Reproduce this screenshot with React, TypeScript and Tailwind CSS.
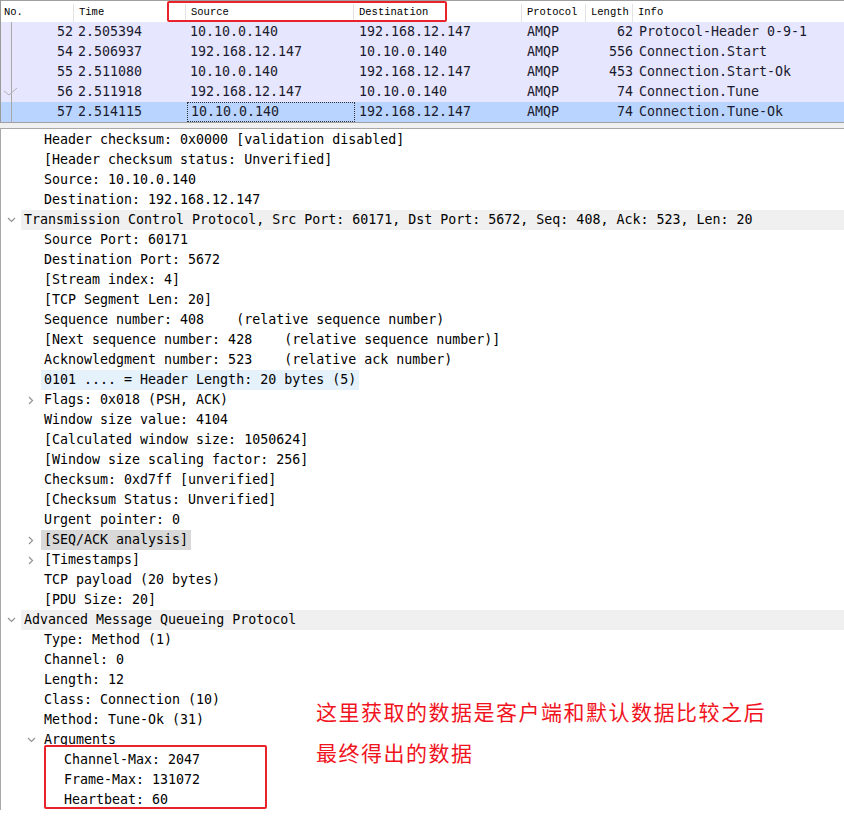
import React from "react";

type Pkt = { no: string; time: string; src: string; dst: string; proto: string; len: string; info: string; sel?: boolean; mark?: "line" | "check" | "end" };

const pkts: Pkt[] = [
  { no: "52", time: "2.505394", src: "10.10.0.140", dst: "192.168.12.147", proto: "AMQP", len: "62", info: "Protocol-Header 0-9-1" },
  { no: "54", time: "2.506937", src: "192.168.12.147", dst: "10.10.0.140", proto: "AMQP", len: "556", info: "Connection.Start" },
  { no: "55", time: "2.511080", src: "10.10.0.140", dst: "192.168.12.147", proto: "AMQP", len: "453", info: "Connection.Start-Ok" },
  { no: "56", time: "2.511918", src: "192.168.12.147", dst: "10.10.0.140", proto: "AMQP", len: "74", info: "Connection.Tune", mark: "check" },
  { no: "57", time: "2.514115", src: "10.10.0.140", dst: "192.168.12.147", proto: "AMQP", len: "74", info: "Connection.Tune-Ok", sel: true },
];

type Row = { t: string; lvl: number; arrow?: "down" | "right"; bg?: "top" | "blue" | "gray" };

const rows: Row[] = [
  { t: "Header checksum: 0x0000 [validation disabled]", lvl: 1 },
  { t: "[Header checksum status: Unverified]", lvl: 1 },
  { t: "Source: 10.10.0.140", lvl: 1 },
  { t: "Destination: 192.168.12.147", lvl: 1 },
  { t: "Transmission Control Protocol, Src Port: 60171, Dst Port: 5672, Seq: 408, Ack: 523, Len: 20", lvl: 0, arrow: "down", bg: "top" },
  { t: "Source Port: 60171", lvl: 1 },
  { t: "Destination Port: 5672", lvl: 1 },
  { t: "[Stream index: 4]", lvl: 1 },
  { t: "[TCP Segment Len: 20]", lvl: 1 },
  { t: "Sequence number: 408    (relative sequence number)", lvl: 1 },
  { t: "[Next sequence number: 428    (relative sequence number)]", lvl: 1 },
  { t: "Acknowledgment number: 523    (relative ack number)", lvl: 1 },
  { t: "0101 .... = Header Length: 20 bytes (5)", lvl: 1, bg: "blue" },
  { t: "Flags: 0x018 (PSH, ACK)", lvl: 1, arrow: "right" },
  { t: "Window size value: 4104", lvl: 1 },
  { t: "[Calculated window size: 1050624]", lvl: 1 },
  { t: "[Window size scaling factor: 256]", lvl: 1 },
  { t: "Checksum: 0xd7ff [unverified]", lvl: 1 },
  { t: "[Checksum Status: Unverified]", lvl: 1 },
  { t: "Urgent pointer: 0", lvl: 1 },
  { t: "[SEQ/ACK analysis]", lvl: 1, arrow: "right", bg: "gray" },
  { t: "[Timestamps]", lvl: 1, arrow: "right" },
  { t: "TCP payload (20 bytes)", lvl: 1 },
  { t: "[PDU Size: 20]", lvl: 1 },
  { t: "Advanced Message Queueing Protocol", lvl: 0, arrow: "down", bg: "top" },
  { t: "Type: Method (1)", lvl: 1 },
  { t: "Channel: 0", lvl: 1 },
  { t: "Length: 12", lvl: 1 },
  { t: "Class: Connection (10)", lvl: 1 },
  { t: "Method: Tune-Ok (31)", lvl: 1 },
  { t: "Arguments", lvl: 1, arrow: "down" },
  { t: "Channel-Max: 2047", lvl: 2 },
  { t: "Frame-Max: 131072", lvl: 2 },
  { t: "Heartbeat: 60", lvl: 2 },
];

const mono = { fontFamily: '"DejaVu Sans Mono", monospace' };

function Arrow({ dir }: { dir: "down" | "right" }) {
  if (dir === "down")
    return (
      <svg width="9" height="6" viewBox="0 0 9 6">
        <path d="M1 1 L4.5 4.5 L8 1" fill="none" stroke="#939393" strokeWidth="1.2" />
      </svg>
    );
  return (
    <svg width="6" height="9" viewBox="0 0 6 9">
      <path d="M1 1 L4.5 4.5 L1 8" fill="none" stroke="#939393" strokeWidth="1.2" />
    </svg>
  );
}

export default function App() {
  return (
    <div className="relative h-[816px] w-[844px] overflow-hidden bg-white text-black" style={mono}>
      {/* Packet list */}
      <div className="border-l border-[#9a9a9a]">
        <div
          className="flex h-[22px] items-center border-t border-[#a0a0a0] bg-white pt-[3px] text-[10.5px] text-black"
          style={{ fontFamily: '"Liberation Mono", monospace' }}
        >
          <div className="flex h-full w-[73px] items-center border-r border-[#e3e3e3] pl-[3px]">No.</div>
          <div className="flex h-full w-[112px] items-center border-r border-[#e3e3e3] pl-[5px]">Time</div>
          <div className="flex h-full w-[168px] items-center border-r border-[#e3e3e3] pl-[5px]">Source</div>
          <div className="flex h-full w-[168px] items-center border-r border-[#e3e3e3] pl-[5px]">Destination</div>
          <div className="flex h-full w-[64px] items-center border-r border-[#e3e3e3] pl-[5px]">Protocol</div>
          <div className="flex h-full w-[47px] items-center border-r border-[#e3e3e3] pl-[5px]">Length</div>
          <div className="flex h-full flex-1 items-center pl-[5px]">Info</div>
        </div>
        {pkts.map((p) => (
          <div
            key={p.no}
            className={`flex h-5 items-center text-[13.3px] leading-5 text-[#1a1a2e] ${p.sel ? "bg-[#b9d5ff]" : "bg-[#e7e6ff]"}`}
          >
            <div className="relative flex h-full w-[73px] items-center justify-end pr-[1px]">
              <svg className="absolute left-0 top-0" width="20" height="20" viewBox="0 0 20 20">
                <line x1="10.5" y1="0" x2="10.5" y2="20" stroke="#a8a8a8" strokeWidth="1" />
                {p.mark === "check" && (
                  <path d="M3 9 L8 13 L16 6" fill="none" stroke="#b0b0b0" strokeWidth="1" />
                )}
              </svg>
              {p.no}
            </div>
            <div className="w-[113px] pl-[4px]">{p.time}</div>
            <div className={`flex h-full w-[168px] items-center pl-[3px] ${p.sel ? "border border-dotted border-[#333]" : ""}`}>
              {p.src}
            </div>
            <div className="w-[168px] pl-[4px]">{p.dst}</div>
            <div className="w-[64px] pl-[4px]">{p.proto}</div>
            <div className="w-[47px] pr-[1px] text-right">{p.len}</div>
            <div className="flex-1 pl-[5px]">{p.info}</div>
          </div>
        ))}
      </div>
      {/* separator */}
      <div className="h-[6px] border-t border-[#a0a0a0] bg-[#f0f0f0]" />
      {/* Detail tree */}
      <div className="border-l border-t border-[#a8a8a8] pt-[1px] text-[13.3px] leading-5">
        {rows.map((r, i) => (
          <div key={i} className="flex h-5 items-center" style={{ paddingLeft: r.lvl * 20 }}>
            <div className="flex h-5 w-[20px] shrink-0 items-center justify-center">
              {r.arrow && <Arrow dir={r.arrow} />}
            </div>
            <span
              className={`h-5 whitespace-pre px-[3px] ${
                r.bg === "top" ? "flex-1 bg-[#f0f0f0]" : r.bg === "blue" ? "bg-[#e5f1fb]" : r.bg === "gray" ? "bg-[#d9d9d9]" : ""
              }`}
            >
              {r.t}
            </span>
          </div>
        ))}
      </div>

      {/* annotations */}
      <div className="absolute left-[167px] top-[1px] h-[21px] w-[280px] rounded-[2px] border-2 border-[#e8232b]" />
      <div className="absolute left-[44px] top-[745px] h-[64px] w-[223px] rounded-[2px] border-2 border-[#e8232b]" />
      <div
        className="absolute left-[316px] top-[691px] text-[21px] leading-[41px] tracking-[1.5px] text-[#f0141e]"
        style={{ fontFamily: '"Noto Sans CJK SC", sans-serif' }}
      >
        <div>这里获取的数据是客户端和默认数据比较之后</div>
        <div>最终得出的数据</div>
      </div>
    </div>
  );
}
